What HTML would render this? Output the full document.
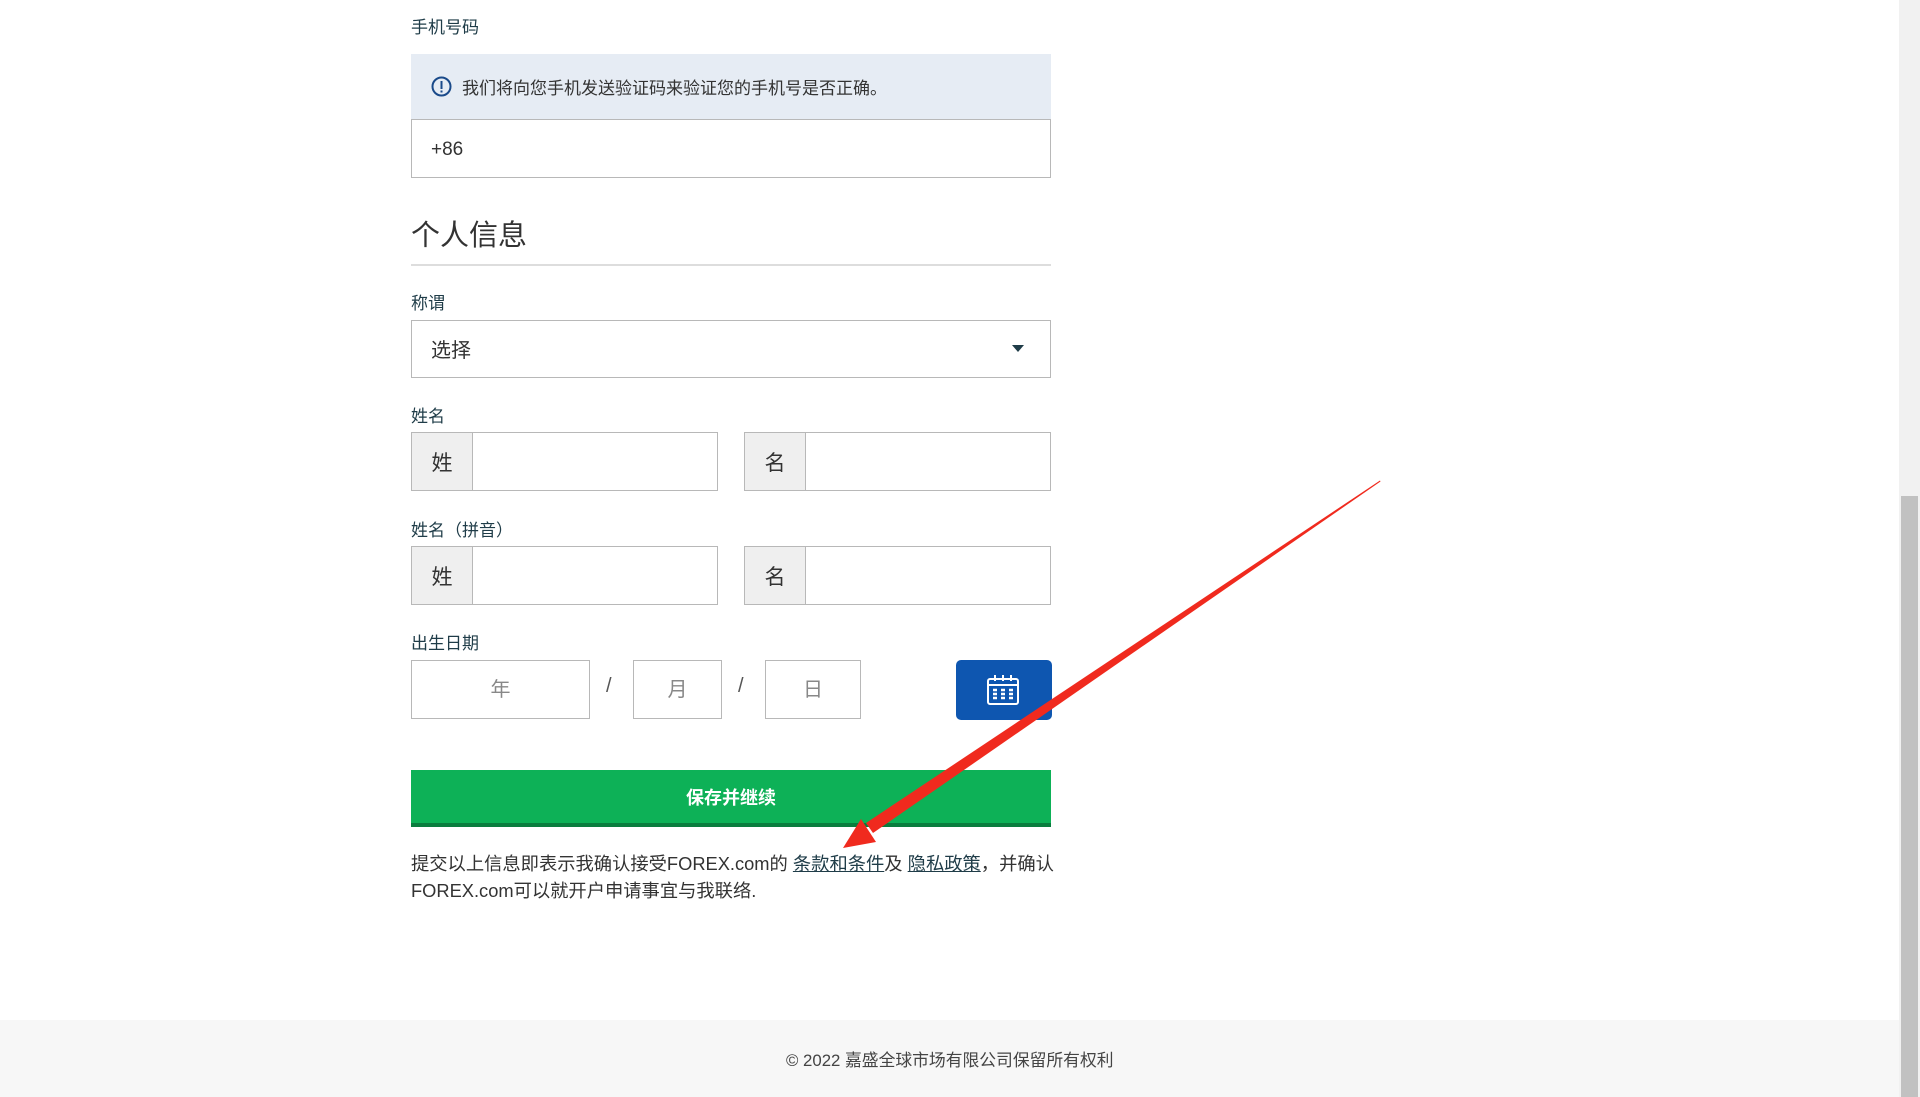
<!DOCTYPE html>
<html><head><meta charset="utf-8"><style>
*{box-sizing:border-box;margin:0;padding:0}
html,body{width:1920px;height:1097px;overflow:hidden;background:#fff;font-family:"Liberation Sans","Noto Sans CJK SC",sans-serif;color:#222;position:relative}
.a{position:absolute}
.lbl{font-size:17px;color:#1f3c48;left:411px}
.box{border:1px solid #b8b8b8;background:#fff}
.pre{position:absolute;left:0;top:0;bottom:0;width:61px;background:#efefef;border-right:1px solid #b8b8b8;font-size:21px;display:flex;align-items:center;justify-content:center;color:#333}
.ph{font-size:20px;color:#888;display:flex;align-items:center;justify-content:center}
.sl{font-size:20px;color:#555}
a{color:#1f3c48;text-decoration:underline}
</style></head><body>
<div class="a lbl" style="top:13px">手机号码</div>
<div class="a" style="left:411px;top:54px;width:640px;height:66px;background:#e6ecf4"></div>
<svg class="a" style="left:431px;top:76px" width="21" height="21" viewBox="0 0 21 21"><circle cx="10.5" cy="10.5" r="9" fill="none" stroke="#1a4a8a" stroke-width="2"/><rect x="9.5" y="5" width="2" height="8" fill="#1a4a8a"/><rect x="9.5" y="14.5" width="2" height="2" fill="#1a4a8a"/></svg>
<div class="a" style="left:462px;top:74px;font-size:17px;color:#333">我们将向您手机发送验证码来验证您的手机号是否正确。</div>
<div class="a box" style="left:411px;top:119px;width:640px;height:59px"></div>
<div class="a" style="left:431px;top:139px;font-size:19px;color:#333">+86</div>
<div class="a" style="left:411px;top:212px;font-size:29px;color:#333">个人信息</div>
<div class="a" style="left:411px;top:264px;width:640px;height:2px;background:#ddd"></div>
<div class="a lbl" style="top:289px">称谓</div>
<div class="a box" style="left:411px;top:320px;width:640px;height:58px"></div>
<div class="a" style="left:431px;top:334px;font-size:20px;color:#333">选择</div>
<div class="a" style="left:1012px;top:345px;width:0;height:0;border-left:6px solid transparent;border-right:6px solid transparent;border-top:7px solid #1f3c48"></div>
<div class="a lbl" style="top:402px">姓名</div>
<div class="a box" style="left:411px;top:432px;width:307px;height:59px"><div class="pre">姓</div></div>
<div class="a box" style="left:744px;top:432px;width:307px;height:59px"><div class="pre">名</div></div>
<div class="a lbl" style="top:516px">姓名（拼音）</div>
<div class="a box" style="left:411px;top:546px;width:307px;height:59px"><div class="pre">姓</div></div>
<div class="a box" style="left:744px;top:546px;width:307px;height:59px"><div class="pre">名</div></div>
<div class="a lbl" style="top:629px">出生日期</div>
<div class="a box ph" style="left:411px;top:660px;width:179px;height:59px;padding-bottom:4px">年</div>
<div class="a sl" style="left:606px;top:675px">/</div>
<div class="a box ph" style="left:633px;top:660px;width:89px;height:59px;padding-bottom:4px">月</div>
<div class="a sl" style="left:738px;top:675px">/</div>
<div class="a box ph" style="left:765px;top:660px;width:96px;height:59px;padding-bottom:4px">日</div>
<div class="a" style="left:956px;top:660px;width:96px;height:60px;background:#0e56b0;border-radius:5px"></div>
<svg class="a" style="left:986px;top:674px" width="34" height="32" viewBox="0 0 34 32" fill="none" stroke="#fff" stroke-width="2"><rect x="2" y="5" width="30" height="25" rx="2"/><line x1="2" y1="11" x2="32" y2="11"/><line x1="9" y1="1" x2="9" y2="7"/><line x1="17" y1="1" x2="17" y2="7"/><line x1="25" y1="1" x2="25" y2="7"/><g stroke-width="2.5"><line x1="7" y1="16" x2="11" y2="16"/><line x1="15" y1="16" x2="19" y2="16"/><line x1="23" y1="16" x2="27" y2="16"/><line x1="7" y1="20" x2="11" y2="20"/><line x1="15" y1="20" x2="19" y2="20"/><line x1="23" y1="20" x2="27" y2="20"/><line x1="7" y1="24" x2="11" y2="24"/><line x1="15" y1="24" x2="19" y2="24"/><line x1="23" y1="24" x2="27" y2="24"/></g></svg>
<div class="a" style="left:411px;top:770px;width:640px;height:57px;background:#0db157;border-bottom:4px solid #0a7d3e;color:#fff;font-weight:bold;font-size:18px;display:flex;align-items:center;justify-content:center">保存并继续</div>
<div class="a" style="left:411px;top:850px;width:650px;font-size:18.3px;line-height:27px;color:#333">提交以上信息即表示我确认接受FOREX.com的 <a>条款和条件</a>及 <a>隐私政策</a>，并确认FOREX.com可以就开户申请事宜与我联络.</div>
<div class="a" style="left:0;top:1020px;width:1899px;height:77px;background:#f7f7f7"></div>
<div class="a" style="left:786px;top:1047px;font-size:16.8px;color:#444">© 2022 嘉盛全球市场有限公司保留所有权利</div>
<div class="a" style="left:1899px;top:0;width:21px;height:1097px;background:#f1f1f1"></div>
<div class="a" style="left:1901px;top:496px;width:17px;height:601px;background:#c1c1c1"></div>
<svg class="a" style="left:0;top:0" width="1920" height="1097"><polygon points="1380,480.5 1380.5,481.5 873,833 866,823" fill="#f02a1e"/><polygon points="843,848 861,819 876,842" fill="#f02a1e"/></svg>
</body></html>
